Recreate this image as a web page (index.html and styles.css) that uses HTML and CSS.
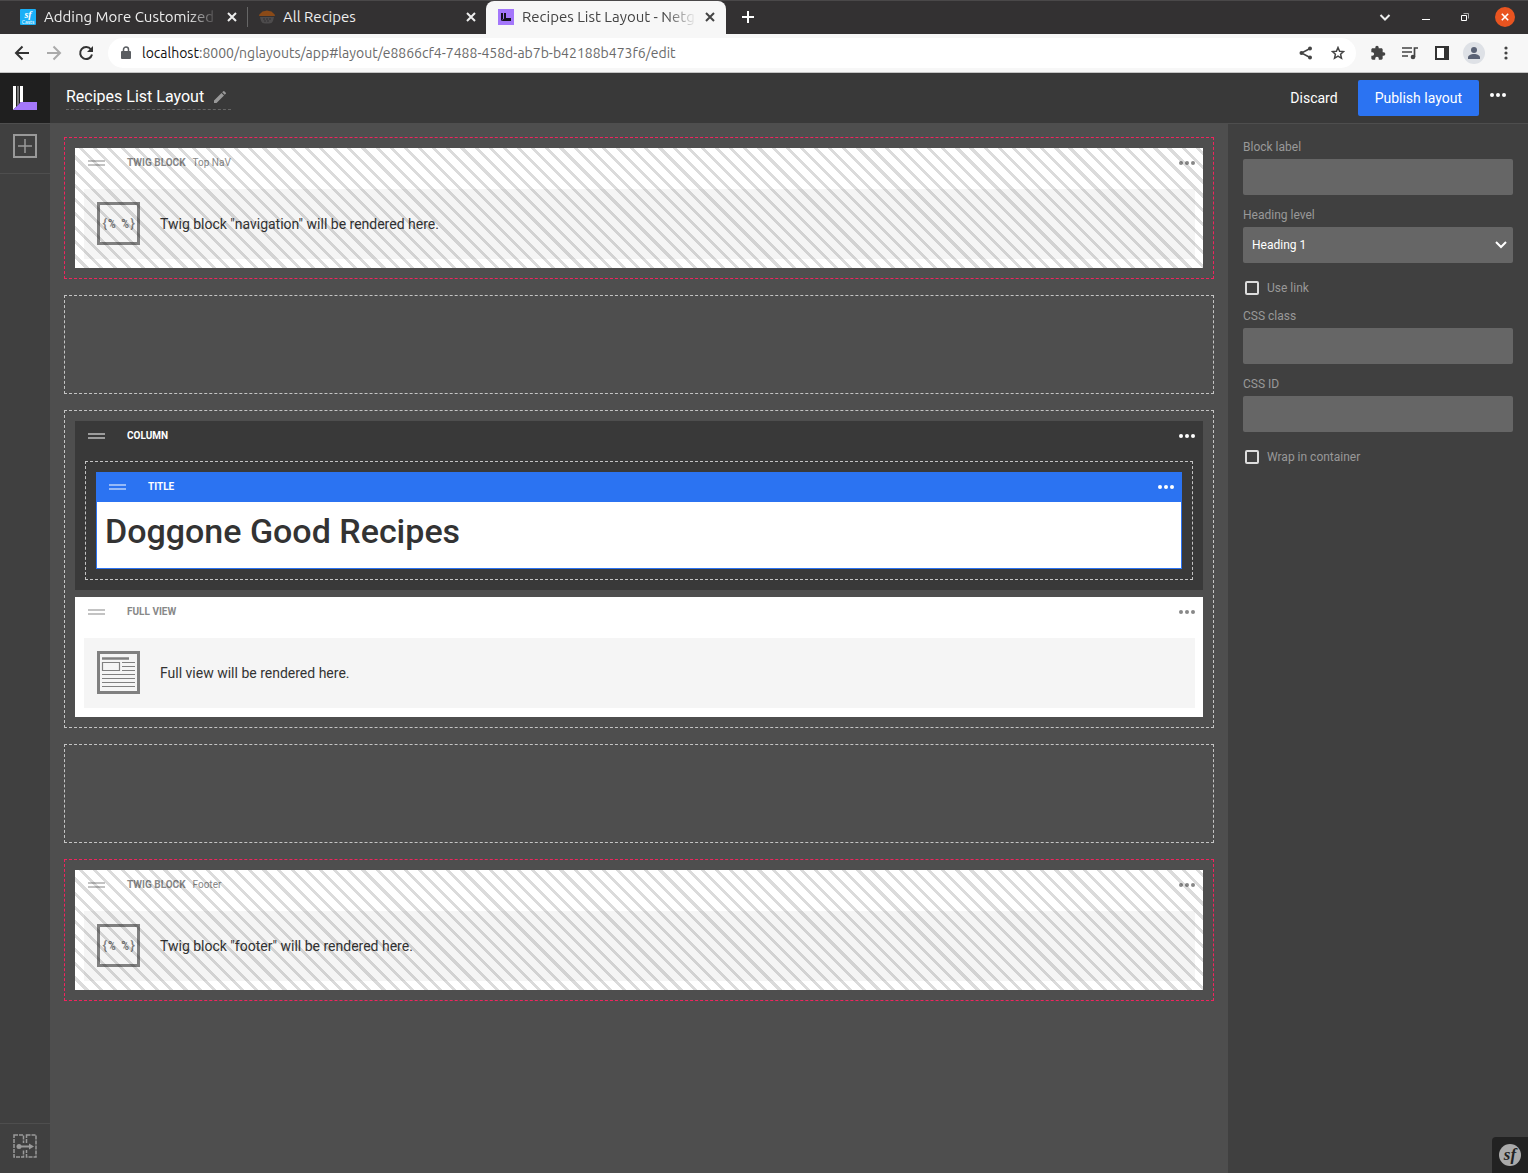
FILE: index.html
```html
<!DOCTYPE html>
<html lang="en">
<head>
<meta charset="utf-8">
<meta name="viewport" content="width=device-width, initial-scale=1">
<title>Recipes List Layout - Netgen Layouts</title>
<link rel="stylesheet" href="styles.css">
</head>
<body>
<svg class="defs" width="0" height="0" aria-hidden="true">
  <symbol id="dots" viewBox="0 0 16 4"><circle cx="2" cy="2" r="2"/><circle cx="8" cy="2" r="2"/><circle cx="14" cy="2" r="2"/></symbol>
  <symbol id="handle" viewBox="0 0 17 6"><path d="M0 0h17v2H0zM0 4h17v2H0z"/></symbol>
  <symbol id="cross" viewBox="0 0 10 10"><path d="M1 1l8 8M9 1L1 9" fill="none" stroke="currentColor" stroke-width="2"/></symbol>
</svg>

<div class="browser">
  <div class="tabstrip">
    <div class="tab">
      <svg class="favicon" viewBox="0 0 16 16"><rect width="16" height="16" rx="1" fill="#1ab0f7"/><text x="8" y="9" class="fav-sf">sf</text><text x="8" y="15" class="fav-casts">Casts</text></svg>
      <span class="tab-title tab-title-faded">Adding More Customized</span>
      <button class="tab-close" aria-label="Close tab"><svg width="10" height="10"><use href="#cross"/></svg></button>
    </div>
    <div class="tab tab-divided">
      <svg class="favicon" viewBox="0 0 16 16"><path d="M1 8l1 4q1 2.500 4 2.500h4q3 0 4-2.500l1-4z" fill="#4d4b4c"/><path d="M0 7q0-2 2-3 1-2 4-2 2-1 4 0 3 0 4 2 2 1 2 3z" fill="#8a4a18"/><path d="M4 10h8M5 12h6" stroke="#333132" stroke-dasharray="2 1"/></svg>
      <span class="tab-title">All Recipes</span>
      <button class="tab-close" aria-label="Close tab"><svg width="10" height="10"><use href="#cross"/></svg></button>
    </div>
    <div class="tab tab-active">
      <svg class="favicon" viewBox="0 0 16 16"><rect width="16" height="16" fill="#a477fb"/><path d="M3 4h2v6L3 12zM6 4h2v5h5v3H3.500L6 9.500z" fill="#17131f"/></svg>
      <span class="tab-title tab-title-faded">Recipes List Layout - Netg</span>
      <button class="tab-close" aria-label="Close tab"><svg width="10" height="10"><use href="#cross"/></svg></button>
    </div>
    <button class="new-tab" aria-label="New tab"><svg width="12" height="12" viewBox="0 0 12 12"><path d="M6 0v12M0 6h12" stroke="#fff" stroke-width="2"/></svg></button>
    <div class="window-controls">
      <button aria-label="Search tabs"><svg width="12" height="12" viewBox="0 0 12 12"><path d="M1.500 4L6 8.500 10.500 4" fill="none" stroke="#eee" stroke-width="2"/></svg></button>
      <button aria-label="Minimize"><svg width="8" height="12" viewBox="0 0 8 12"><path d="M0 8.500h8" stroke="#fff"/></svg></button>
      <button aria-label="Restore"><svg width="8" height="8" viewBox="0 0 8 8"><path d="M2.500 .5h5v5" fill="none" stroke="#aaa"/><path d="M.5 2.500h5v5h-5z" fill="none" stroke="#fff"/></svg></button>
      <button class="window-close" aria-label="Close window"><svg width="8" height="8"><use href="#cross"/></svg></button>
    </div>
  </div>
  <div class="toolbar">
    <div class="nav-buttons">
      <button aria-label="Back"><svg width="16" height="16" viewBox="0 0 16 16"><path d="M15 8H2M8.500 1.500L2 8l6.500 6.500" fill="none" stroke="#333" stroke-width="2"/></svg></button>
      <button aria-label="Forward"><svg width="16" height="16" viewBox="0 0 16 16"><path d="M1 8h13M7.500 1.500L14 8l-6.500 6.500" fill="none" stroke="#aaa" stroke-width="2"/></svg></button>
      <button aria-label="Reload"><svg width="16" height="16" viewBox="0 0 16 16"><path d="M13 4.500A6 6 0 1 0 14 9.500" fill="none" stroke="#333" stroke-width="2"/><path d="M15 1v6H9z" fill="#333"/></svg></button>
    </div>
    <div class="address">
      <svg width="10" height="14" viewBox="0 0 10 14"><path d="M1 5h8q1 0 1 1v6q0 1-1 1H1q-1 0-1-1V6q0-1 1-1z" fill="#5a5d61"/><path d="M2.500 6V3.500a2.500 2.500 0 0 1 5 0V6" fill="none" stroke="#5a5d61" stroke-width="1.500"/></svg>
      <span class="url"><b>localhost</b>:8000/nglayouts/app#layout/e8866cf4-7488-458d-ab7b-b42188b473f6/edit</span>
      <button class="tool" aria-label="Share"><svg width="14" height="14" viewBox="0 0 14 14"><path d="M11 2.500L2.500 7l8.500 4.500" fill="none" stroke="#444" stroke-width="1.500"/><g fill="#444"><circle cx="11" cy="2.500" r="2"/><circle cx="2.500" cy="7" r="2"/><circle cx="11" cy="11.500" r="2"/></g></svg></button>
      <button class="tool" aria-label="Bookmark"><svg width="14" height="14" viewBox="0 0 14 14"><path d="M7 1.500l1.600 3.700 4 .4-3 2.700.9 4L7 10.200l-3.500 2.100.9-4-3-2.700 4-.4z" fill="none" stroke="#444" stroke-width="1.500"/></svg></button>
    </div>
    <div class="extensions">
      <button class="tool" aria-label="Extensions"><svg width="16" height="16" viewBox="0 0 24 24"><path fill="#444" d="M20.500 11H19V7c0-1.100-.9-2-2-2h-4V3.500a2.500 2.500 0 0 0-5 0V5H4c-1.100 0-2 .9-2 2v3.800h1.500a2.700 2.700 0 0 1 0 5.400H2V20c0 1.100.9 2 2 2h3.800v-1.500a2.700 2.700 0 0 1 5.400 0V22H17c1.100 0 2-.9 2-2v-4h1.500a2.500 2.500 0 0 0 0-5z"/></svg></button>
      <button class="tool" aria-label="Media"><svg width="16" height="14" viewBox="0 0 16 14"><path d="M0 2h10M0 6h10M0 10h6M12.500 11V2H16" fill="none" stroke="#444" stroke-width="1.700"/><circle cx="11" cy="11" r="2.300" fill="#444"/></svg></button>
      <button class="tool" aria-label="Side panel"><svg width="14" height="14" viewBox="0 0 14 14"><path d="M1 1h12v12H1z" fill="#fff" stroke="#333" stroke-width="2"/><path d="M9 1h5v12H9z" fill="#333"/></svg></button>
      <button class="tool" aria-label="Profile"><svg width="22" height="22" viewBox="0 0 22 22"><circle cx="11" cy="11" r="11" fill="#dee1e6"/><circle cx="11" cy="8" r="3" fill="#5a6275"/><path d="M5 17v-1.500c0-2 3-3.500 6-3.500s6 1.500 6 3.500V17z" fill="#5a6275"/></svg></button>
      <button class="tool" aria-label="Menu"><svg width="4" height="14" viewBox="0 0 4 14"><g fill="#444"><circle cx="2" cy="2" r="1.600"/><circle cx="2" cy="7" r="1.600"/><circle cx="2" cy="12" r="1.600"/></g></svg></button>
    </div>
  </div>
</div>

<header class="app-header">
  <a class="logo" href="#" aria-label="Netgen Layouts"><svg width="24" height="24" viewBox="0 0 24 24"><path d="M0 0h3v21L0 24z" fill="#fff"/><path d="M4 0h2v18l-2 2z" fill="#777"/><path d="M7 0h3v16H8l-1 1z" fill="#fff"/><path d="M8 16h16v8H0z" fill="#a477fb"/></svg></a>
  <h1 class="layout-name">Recipes List Layout
    <svg width="12" height="12" viewBox="0 0 12 12"><path d="M0 12V9.500L7.500 2 10 4.500 2.500 12zM8.200 1.300L9.300.2q.5-.4 1 0l1.500 1.500q.4.500 0 1L10.700 3.800z" fill="#999"/></svg>
  </h1>
  <div class="header-actions">
    <button class="discard">Discard</button>
    <button class="publish">Publish layout</button>
    <button class="more" aria-label="More"><svg width="16" height="4" fill="currentColor"><use href="#dots"/></svg></button>
  </div>
</header>

<div class="app">
  <nav class="rail">
    <button class="rail-add" aria-label="Add block"><svg width="24" height="24" viewBox="0 0 24 24"><path d="M1 1h22v22H1z" fill="none" stroke="#999" stroke-width="2"/><path d="M12 5v14M5 12h14" stroke="#999" stroke-width="1.500"/></svg></button>
    <button class="rail-toggle" aria-label="Switch layout"><svg width="24" height="24" viewBox="0 0 24 24"><path d="M1 1h9.500v22H1zM13.500 1H23v22h-9.500z" fill="none" stroke="#999" stroke-width="1.500" stroke-dasharray="4 1"/><path d="M4 9h17v7H4z" fill="#404040"/><path d="M5 12.500h12" stroke="#999" stroke-width="2"/><circle cx="6" cy="12.500" r="2.500" fill="#999"/><path d="M16 9.500l5 3-5 3z" fill="#999"/></svg></button>
  </nav>

  <main class="canvas">
    <section class="zone zone-linked">
      <article class="block block-linked">
        <header class="block-head">
          <svg class="handle" width="17" height="6"><use href="#handle"/></svg>
          <span class="block-type">Twig block</span><span class="block-name">Top NaV</span>
          <button class="block-menu" aria-label="Block menu"><svg width="16" height="4"><use href="#dots"/></svg></button>
        </header>
        <div class="placeholder">
          <svg width="43" height="43" viewBox="0 0 43 43"><path d="M1.500 1.500h40v40h-40z" fill="none" stroke="#808080" stroke-width="3"/><text class="twig-mark" x="4" y="26">{%</text><text class="twig-mark" x="39" y="26" text-anchor="end">%}</text></svg>
          <p>Twig block "navigation" will be rendered here.</p>
        </div>
      </article>
    </section>

    <section class="zone zone-empty"></section>

    <section class="zone">
      <article class="block block-container">
        <header class="block-head">
          <svg class="handle" width="17" height="6"><use href="#handle"/></svg>
          <span class="block-type">Column</span>
          <button class="block-menu" aria-label="Block menu"><svg width="16" height="4"><use href="#dots"/></svg></button>
        </header>
        <div class="zone zone-inner">
          <article class="block block-selected">
            <header class="block-head">
              <svg class="handle" width="17" height="6"><use href="#handle"/></svg>
              <span class="block-type">Title</span>
              <button class="block-menu" aria-label="Block menu"><svg width="16" height="4"><use href="#dots"/></svg></button>
            </header>
            <h2 class="title-text">Doggone Good Recipes</h2>
          </article>
        </div>
      </article>
      <article class="block">
        <header class="block-head">
          <svg class="handle" width="17" height="6"><use href="#handle"/></svg>
          <span class="block-type">Full view</span>
          <button class="block-menu" aria-label="Block menu"><svg width="16" height="4"><use href="#dots"/></svg></button>
        </header>
        <div class="placeholder">
          <svg width="43" height="43" viewBox="0 0 43 43"><path d="M1.500 1.500h40v40h-40z" fill="none" stroke="#808080" stroke-width="3"/><path d="M5 7.500h27" stroke="#808080" stroke-width="2.500"/><path d="M5.500 11.500h17v8h-17zM25 11.500h13M25 15.500h13M25 19.500h13M5 23.500h33M5 27.500h33M5 31.500h33M5 35.500h33" fill="none" stroke="#808080" stroke-width="1.200"/></svg>
          <p>Full view will be rendered here.</p>
        </div>
      </article>
    </section>

    <section class="zone zone-empty"></section>

    <section class="zone zone-linked">
      <article class="block block-linked">
        <header class="block-head">
          <svg class="handle" width="17" height="6"><use href="#handle"/></svg>
          <span class="block-type">Twig block</span><span class="block-name">Footer</span>
          <button class="block-menu" aria-label="Block menu"><svg width="16" height="4"><use href="#dots"/></svg></button>
        </header>
        <div class="placeholder">
          <svg width="43" height="43" viewBox="0 0 43 43"><path d="M1.500 1.500h40v40h-40z" fill="none" stroke="#808080" stroke-width="3"/><text class="twig-mark" x="4" y="26">{%</text><text class="twig-mark" x="39" y="26" text-anchor="end">%}</text></svg>
          <p>Twig block "footer" will be rendered here.</p>
        </div>
      </article>
    </section>
  </main>

  <aside class="panel">
    <form class="settings">
      <div class="field"><label for="block-label">Block label</label><input type="text" id="block-label"></div>
      <div class="field"><label for="heading-level">Heading level</label>
        <div class="select">
          <select id="heading-level"><option>Heading 1</option><option>Heading 2</option><option>Heading 3</option></select>
          <svg width="12" height="8" viewBox="0 0 12 8"><path d="M1 1l5 5 5-5" fill="none" stroke="#fff" stroke-width="2"/></svg>
        </div>
      </div>
      <div class="check"><input type="checkbox" id="use-link"><label for="use-link">Use link</label></div>
      <div class="field"><label for="css-class">CSS class</label><input type="text" id="css-class"></div>
      <div class="field"><label for="css-id">CSS ID</label><input type="text" id="css-id"></div>
      <div class="check"><input type="checkbox" id="wrap"><label for="wrap">Wrap in container</label></div>
    </form>
  </aside>
</div>

<button class="debug-toggle" aria-label="Symfony toolbar"><svg width="22" height="22" viewBox="0 0 22 22"><circle cx="11" cy="11" r="11" fill="#aaa"/><text class="debug-mark" x="11" y="16">sf</text></svg></button>
</body>
</html>
```
FILE: styles.css
```css
* { box-sizing: border-box; }

body {
  margin: 0;
  min-height: 100vh;
  display: flex;
  flex-direction: column;
  background: #4e4e4e;
  color: #333;
  font: 14px/20px Roboto, sans-serif;
}

button {
  padding: 0;
  border: 0;
  background: none;
  color: inherit;
  font: inherit;
  cursor: pointer;
}

svg { display: block; flex: none; }
.defs { position: absolute; }
h1, h2, p { margin: 0; }

/* Browser window */
.browser { font-family: Ubuntu, "Noto Sans", sans-serif; }

.tabstrip {
  display: flex;
  height: 34px;
  padding-left: 8px;
  border-top: 1px solid #4a4849;
  background: #333132;
  color: #eee;
}

.tab {
  display: flex;
  align-items: center;
  gap: 8px;
  width: 239px;
  padding: 0 10px 2px 12px;
}

.tab-divided {
  background: linear-gradient(#666, #666) 0 6px / 1px 20px no-repeat;
}

.tab-active {
  width: 240px;
  padding-right: 11px;
  border-radius: 8px 8px 0 0;
  background: #f7f7f7;
  color: #444;
}

.favicon { width: 16px; height: 16px; }
.fav-sf { fill: #fff; font: italic bold 10px "Liberation Serif", serif; text-anchor: middle; }
.fav-casts { fill: #fff; font: 5px "Noto Sans", sans-serif; text-anchor: middle; }

.tab-title { flex: 1; font-size: 15px; white-space: nowrap; }
.tab-title-faded { mask-image: linear-gradient(to left, transparent, #000 32px); }

.new-tab { padding: 0 16px 2px; }

.window-controls {
  display: flex;
  align-items: center;
  gap: 31px;
  margin-left: auto;
  padding: 0 13px 2px 0;
}

.window-close {
  display: grid;
  place-items: center;
  width: 20px;
  height: 20px;
  margin-left: -5px;
  border-radius: 50%;
  background: #e95420;
  color: #fff;
}

.toolbar {
  display: flex;
  align-items: center;
  height: 39px;
  padding-left: 14px;
  border-bottom: 1px solid #c4c4c4;
  background: #f7f7f7;
}

.nav-buttons { display: flex; gap: 16px; margin-right: 14px; }

.address {
  flex: 1;
  display: flex;
  align-items: center;
  height: 30px;
  padding: 0 2px 0 13px;
  border-radius: 15px;
  background: #fff;
}

.url { flex: 1; margin-left: 11px; color: #6a6a6a; }
.url b { color: #111; font-weight: 400; }

.tool { display: grid; place-items: center; width: 32px; height: 30px; }
.extensions { display: flex; padding: 0 6px; }

/* Application header */
.app-header {
  display: flex;
  height: 51px;
  border-bottom: 1px solid #4e4e4e;
  background: #393939;
  color: #fff;
}

.logo {
  display: grid;
  place-items: center;
  width: 50px;
  background: #1f1f1f;
}

.layout-name {
  display: flex;
  align-items: center;
  gap: 10px;
  height: 24px;
  margin: 13px 16px;
  padding: 0 5px 2px 0;
  border-bottom: 1px dashed #666;
  font-size: 16px;
  font-weight: 400;
}

.header-actions {
  display: flex;
  margin-left: auto;
  padding: 7px 22px 7px 0;
}

.discard { margin-right: 20px; }

.publish {
  padding: 0 17px;
  border-radius: 2px;
  background: #2b73f2;
}

.more { align-self: center; margin-left: 11px; padding-bottom: 6px; }

/* Workspace */
.app { flex: 1; display: flex; }

.rail {
  display: flex;
  flex-direction: column;
  justify-content: space-between;
  width: 50px;
  background: #404040;
}

.rail button { display: grid; place-items: center; height: 50px; padding-bottom: 6px; }
.rail .rail-add { border-bottom: 1px solid #4e4e4e; }
.rail .rail-toggle { border-top: 1px solid #4e4e4e; }

.canvas {
  flex: 1;
  display: flex;
  flex-direction: column;
  gap: 16px;
  padding: 13px 14px;
}

.zone {
  display: flex;
  flex-direction: column;
  gap: 7px;
  padding: 10px;
  border: 1px dashed #c4c4c4;
}

.zone-linked { border-color: #f0245e; }
.zone-empty { min-height: 99px; }
.zone-inner { margin: 10px; }

.block { position: relative; background: #fff; }

.block-head {
  display: flex;
  align-items: center;
  height: 30px;
  padding: 0 8px 0 13px;
  color: #888;
  fill: #888;
  font-size: 10px;
}

.handle { margin-right: 22px; opacity: .5; }
.block-type { font-weight: 700; text-transform: uppercase; }
.block-name { margin-left: 7px; }
.block-menu { margin-left: auto; }

.placeholder {
  display: flex;
  align-items: center;
  gap: 20px;
  height: 70px;
  margin: 11px 8px 0 9px;
  padding: 0 13px 1px;
  background: #f5f5f5;
}

.block:has(> .placeholder) { padding-bottom: 9px; }

.twig-mark { fill: #808080; font: bold 12px "Roboto Mono", Roboto, sans-serif; }

.block-linked::after {
  content: "";
  position: absolute;
  inset: 0;
  background: repeating-linear-gradient(45deg, transparent 0 7px, rgba(0, 0, 0, .14) 7px 10px);
  pointer-events: none;
}

.block-container { background: #393939; }
.block-container > .block-head { color: #fff; fill: #fff; }

.block-selected { border: 1px solid #2b73f2; border-top: 0; }
.block-selected > .block-head { margin: 0 -1px; background: #2b73f2; color: #fff; fill: #fff; }

.title-text {
  padding: 9px 8px 17px;
  font-size: 34px;
  font-weight: 500;
  line-height: 40px;
}

/* Settings panel */
.panel { width: 300px; padding: 15px; background: #404040; }

.settings {
  display: flex;
  flex-direction: column;
  gap: 12px;
  color: #999;
  font-size: 12px;
  line-height: 16px;
}

.field { display: flex; flex-direction: column; gap: 4px; }

.field input,
.field select {
  width: 100%;
  height: 36px;
  padding: 0 9px;
  border: 0;
  border-radius: 2px;
  background: #666;
  color: #fff;
  font: inherit;
  appearance: none;
}

.select { display: grid; align-items: center; }
.select > * { grid-area: 1 / 1; }
.select > svg { justify-self: end; margin-right: 6px; pointer-events: none; }

.check { display: flex; align-items: center; gap: 8px; margin-top: 5px; padding-left: 2px; }

.check input {
  width: 14px;
  height: 14px;
  margin: 0;
  border: 2px solid #ddd;
  border-radius: 2px;
  appearance: none;
}

.debug-toggle {
  position: fixed;
  right: 0;
  bottom: 0;
  display: grid;
  place-items: center;
  width: 36px;
  height: 36px;
  border-radius: 4px 0 0 0;
  background: #222;
}

.debug-mark { fill: #222; font: italic bold 17px "Liberation Serif", serif; text-anchor: middle; }
```
